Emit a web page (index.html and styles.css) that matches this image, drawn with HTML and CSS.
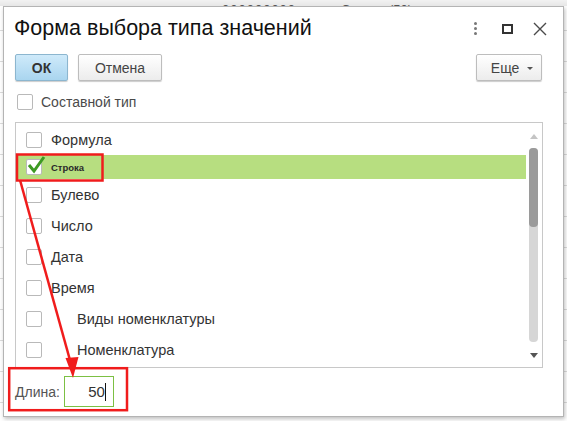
FILE: index.html
```html
<!DOCTYPE html>
<html>
  <head>
    <meta charset="utf-8">
    <title>Форма выбора типа значений</title>
    <link rel="stylesheet" href="styles.css">
  </head>
  <body>
    <!-- строка списка позади окна -->
    <div class="backdrop">
      <span class="bd-code">000000000</span>
      <span class="bd-name">С</span>
      <span class="bd-len">(50)</span>
    </div>

    <div class="window">
      <div class="header">
        <div class="title">Форма выбора типа значений</div>
        <div class="win-buttons">
          <span class="dots"><i></i><i></i><i></i></span>
          <span class="maximize"></span>
          <svg class="close" width="14" height="14" viewBox="0 0 14 14">
            <path d="M1 1 L13 13 M13 1 L1 13" stroke="#4a4a4a" stroke-width="1.4" fill="none"/>
          </svg>
        </div>
      </div>

      <div class="toolbar">
        <button class="btn btn-default">ОК</button>
        <button class="btn">Отмена</button>
        <div class="spacer"></div>
        <button class="btn btn-more">Еще <span class="caret"></span></button>
      </div>

      <label class="compound">
        <span class="box"></span>
        <span>Составной тип</span>
      </label>

      <div class="list">
        <div class="rows">
          <div class="row"><span class="box"></span><span class="text">Формула</span></div>
          <div class="row selected">
            <span class="box">
              <svg class="check" width="20" height="20" viewBox="0 0 20 20">
                <path d="M2 10 L7 16 L17 2" stroke="#3d9a23" stroke-width="3" fill="none" stroke-linejoin="miter"/>
              </svg>
            </span>
            <span class="text small">Строка</span>
          </div>
          <div class="row"><span class="box"></span><span class="text">Булево</span></div>
          <div class="row"><span class="box"></span><span class="text">Число</span></div>
          <div class="row"><span class="box"></span><span class="text">Дата</span></div>
          <div class="row"><span class="box"></span><span class="text">Время</span></div>
          <div class="row"><span class="box"></span><span class="text sub">Виды номенклатуры</span></div>
          <div class="row"><span class="box"></span><span class="text sub">Номенклатура</span></div>
        </div>
        <div class="scrollbar">
          <span class="arrow-up"></span>
          <div class="track"><div class="thumb"></div></div>
          <span class="arrow-down"></span>
        </div>
      </div>

      <div class="footer">
        <span class="label">Длина:</span>
        <div class="field"><span class="value">50</span><span class="cursor"></span></div>
      </div>
    </div>

    <!-- пометки поверх окна -->
    <svg class="marks" width="567" height="421" viewBox="0 0 567 421">
      <rect x="17" y="154.5" width="85.5" height="26" fill="none" stroke="#f01c1c" stroke-width="2.5"/>
      <rect x="9.2" y="368.2" width="117.8" height="42" fill="none" stroke="#f01c1c" stroke-width="2.5"/>
      <line x1="20" y1="180" x2="70.5" y2="362" stroke="#f01c1c" stroke-width="2.5"/>
      <polygon points="73,378 65.5,358 78.5,357" fill="#f01c1c"/>
    </svg>
  </body>
</html>
```

FILE: styles.css
```css
* {
  box-sizing: border-box;
}
body {
  margin: 0;
  width: 567px;
  height: 421px;
  overflow: hidden;
  position: relative;
  /* строки таблицы, видные по краям окна */
  background: repeating-linear-gradient(#fff 0 30px, #dcdcdc 30px 31px);
  font-family: "Liberation Sans", Arial, sans-serif;
  color: #333;
}

.backdrop {
  height: 6px;
  overflow: hidden;
  background: linear-gradient(#f2f2f2, #e6e6e6);
  position: relative;
  font-size: 13px;
  color: #555;
  white-space: nowrap;
}
.backdrop span {
  position: absolute;
  top: 2px;
}
.bd-code { left: 222px; letter-spacing: 1px; }
.bd-name { left: 341px; }
.bd-len  { left: 389px; }

.window {
  width: 561px;
  height: 411px;
  margin-left: 3px;
  background: #fff;
  border: 1px solid #b4b4b4;
  box-shadow: 1px 2px 4px rgba(0, 0, 0, 0.25);
  display: flex;
  flex-direction: column;
}

/* заголовок окна */
.header {
  height: 42px;
  display: flex;
  align-items: center;
  padding: 1px 16px 0 10px;
}
.title {
  flex: 1;
  font-size: 21.5px;
  color: #111;
}
.win-buttons {
  display: flex;
  align-items: center;
}
.dots {
  display: flex;
  flex-direction: column;
  gap: 2px;
  width: 3px;
  margin-right: 25px;
}
.dots i {
  width: 3px;
  height: 3px;
  border-radius: 50%;
  background: #777;
}
.maximize {
  width: 11px;
  height: 10px;
  border: 2px solid #333;
  margin-right: 20px;
}

/* командная панель */
.toolbar {
  display: flex;
  height: 27px;
  margin-top: 5px;
  padding: 0 21px 0 11px;
  gap: 10px;
}
.spacer {
  flex: 1;
}
.btn {
  height: 27px;
  font-family: inherit;
  font-size: 14px;
  color: #444;
  border: 1px solid #bdbdbd;
  border-radius: 2px;
  background: linear-gradient(#ffffff, #ececec);
  box-shadow: 0 1px 1px rgba(0, 0, 0, 0.2);
  padding: 0;
  width: 84px;
}
.btn-default {
  width: 53px;
  font-weight: bold;
  color: #333;
  border-color: #8cb6cf;
  background: linear-gradient(#cfeafa, #a9d5ef);
}
.btn-more {
  width: 66px;
  padding-left: 6px;
}
.caret {
  display: inline-block;
  margin-left: 4px;
  vertical-align: middle;
  border-left: 3px solid transparent;
  border-right: 3px solid transparent;
  border-top: 3px solid #555;
}

/* флажки */
.box {
  width: 16px;
  height: 16px;
  border: 1px solid #b9b9b9;
  border-radius: 2px;
  background: #fff;
  flex: none;
  position: relative;
}
.compound {
  display: flex;
  align-items: center;
  gap: 8px;
  height: 16px;
  margin-top: 13px;
  padding-left: 13px;
  font-size: 14px;
  color: #4a4a4a;
}

/* список типов */
.list {
  display: flex;
  width: 528px;
  height: 246px;
  margin: 12px 0 0 11px;
  border: 1px solid #c8c8c8;
  padding: 1px 4px 0 0;
  background: #fff;
}
.rows {
  width: 510px;
}
.row {
  display: flex;
  align-items: center;
  gap: 9px;
  height: 31px;
  padding-left: 10px;
  font-size: 14.5px;
  color: #333;
}
.row.selected {
  height: 24px;
  background: #b7de80;
}
.text.small {
  font-size: 9.5px;
  font-weight: bold;
  color: #2a2a2a;
}
.text.sub {
  padding-left: 26px;
}
.check {
  position: absolute;
  left: 0px;
  top: -5px;
}

.scrollbar {
  width: 9px;
  margin-left: 3px;
  display: flex;
  flex-direction: column;
  align-items: center;
}
.arrow-up,
.arrow-down {
  width: 0;
  height: 0;
  border-left: 4px solid transparent;
  border-right: 4px solid transparent;
}
.arrow-up {
  margin-top: 10px;
  border-bottom: 5px solid #c4c4c4;
}
.arrow-down {
  margin-top: 11px;
  border-top: 5px solid #555;
}
.track {
  width: 9px;
  height: 194px;
  margin-top: 9px;
  border-radius: 4px;
  background: #d6d6d6;
}
.thumb {
  height: 79px;
  border-radius: 4px;
  background: #9a9a9a;
}

/* длина строки */
.footer {
  display: flex;
  align-items: center;
  gap: 4px;
  margin-top: 8px;
  padding-left: 11px;
  font-size: 14px;
  color: #555;
}
.field {
  width: 50px;
  height: 31px;
  border: 1.5px solid #7cc043;
  display: flex;
  align-items: center;
  justify-content: flex-end;
  padding-right: 7px;
  font-size: 15px;
  color: #333;
}
.cursor {
  width: 1px;
  height: 18px;
  background: #111;
}

.marks {
  position: absolute;
  left: 0;
  top: 0;
  pointer-events: none;
}
```
